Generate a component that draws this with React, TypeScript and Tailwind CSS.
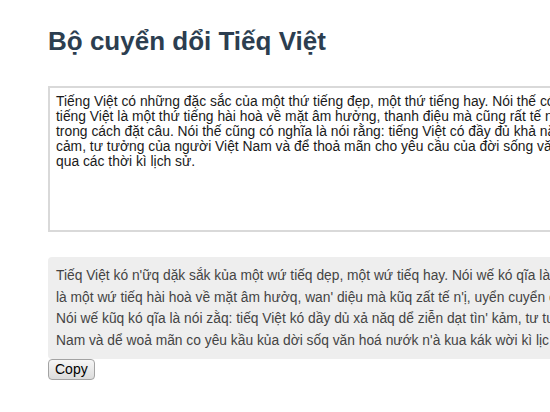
import { useState } from 'react';

const SOURCE = [
  'Tiếng Việt có những đặc sắc của một thứ tiếng đẹp, một thứ tiếng hay. Nói thế có nghĩa là nói rằng:',
  'tiếng Việt là một thứ tiếng hài hoà về mặt âm hưởng, thanh điệu mà cũng rất tế nhị, uyển chuyển',
  'trong cách đặt câu. Nói thế cũng có nghĩa là nói rằng: tiếng Việt có đầy đủ khả năng để diễn đạt tình',
  'cảm, tư tưởng của người Việt Nam và để thoả mãn cho yêu cầu của đời sống văn hoá nước nhà',
  'qua các thời kì lịch sử.',
].join('\n');

const RESULT = [
  "Tiếq Việt kó n'ữq dặk sắk kủa một wứ tiếq dẹp, một wứ tiếq hay. Nói wế kó qĩa là nói zằq: tiếq Việt",
  "là một wứ tiếq hài hoà về mặt âm hưởq, wan' diệu mà kũq zất tế n'ị, uyển cuyển coq kák dặt kâu.",
  "Nói wế kũq kó qĩa là nói zằq: tiếq Việt kó dầy dủ xả năq dể ziễn dạt tìn' kảm, tư tưởq kủa qười Việt",
  "Nam và dể woả mãn co yêu kầu kủa dời sốq văn hoá nướk n'à kua kák wời kì lịc sử.",
].join('\n');

export default function App() {
  const [text, setText] = useState(SOURCE);

  return (
    <div className="w-full min-h-screen overflow-hidden bg-white font-['Liberation_Sans',Arial,sans-serif]">
      <div className="w-[760px] pl-12 pt-[26px]">
        {/* Title */}
        <h1 className="text-[26px] leading-[30px] font-bold text-[#2c3e50]">Bộ cuyển dổi Tiếq Việt</h1>

        {/* Input */}
        <textarea
          value={text}
          onChange={e => setText(e.target.value)}
          spellCheck={false}
          className="mt-[30px] block w-[712px] h-[146px] resize-none border-2 border-[#d9d9d9] p-[6px] text-[13.85px] leading-[15px] text-[#1a1a1a] outline-none"
        />

        {/* Converted output */}
        <div className="mt-[25px] w-[712px] rounded bg-[#eeeeee] px-2 py-2 text-[13.8px] leading-[21.5px] text-[#444] whitespace-pre-line">
          {RESULT}
        </div>

        <button
          type="button"
          onClick={() => navigator.clipboard?.writeText(RESULT)}
          className="block h-[21px] px-[6px] rounded-sm border border-[#a3a3a3] bg-gradient-to-b from-[#f6f6f6] to-[#dcdcdc] text-[14px] leading-[19px] text-black"
        >
          Copy
        </button>
      </div>
    </div>
  );
}
